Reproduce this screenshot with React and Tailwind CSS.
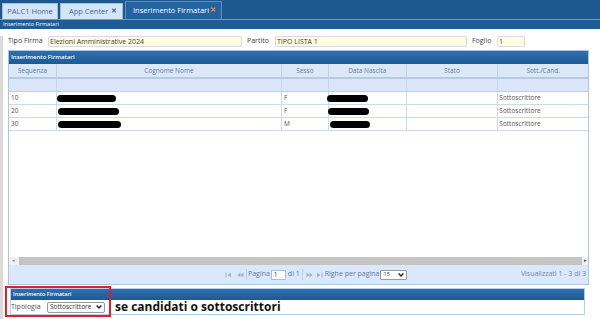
const cols = [
  { label: 'Sequenza', w: 'w-[48px]' },
  { label: 'Cognome Nome', w: 'w-[226px]' },
  { label: 'Sesso', w: 'w-[47px]' },
  { label: 'Data Nascita', w: 'w-[78px]' },
  { label: 'Stato', w: 'w-[92px]' },
  { label: 'Sott./Cand.', w: 'w-[90px]' },
];

const rows = [
  { seq: '10', name: 'w-[59px]', sex: 'F', birth: 'w-[41px] ml-[-2px]' },
  { seq: '20', name: 'w-[61px] ml-[1px]', sex: 'F', birth: 'w-[41px] ml-[-1px]' },
  { seq: '30', name: 'w-[63px] ml-[1px]', sex: 'M', birth: 'w-[40px] ml-[1px]' },
];

function Blot({ className }) {
  return <span className={`block h-[7px] rounded-full bg-black ${className}`} />;
}

function PagerIcon({ dir = 'left', bar }) {
  return (
    <svg width="7" height="6" viewBox="0 0 7 6" className="shrink-0">
      {dir === 'left' ? (
        <>
          {bar && <rect x="0.5" y="0.5" width="1" height="5" fill="#9fb7d3" />}
          <path d={bar ? 'M6 0.5 L2.5 3 L6 5.5Z' : 'M3.5 0.5 L0.5 3 L3.5 5.5Z M6.5 0.5 L3.5 3 L6.5 5.5Z'} fill="#9fb7d3" />
        </>
      ) : (
        <>
          {bar && <rect x="5.5" y="0.5" width="1" height="5" fill="#9fb7d3" />}
          <path d={bar ? 'M1 0.5 L4.5 3 L1 5.5Z' : 'M0.5 0.5 L3.5 3 L0.5 5.5Z M3.5 0.5 L6.5 3 L3.5 5.5Z'} fill="#9fb7d3" />
        </>
      )}
    </svg>
  );
}

function Chevron() {
  return (
    <svg width="6" height="4" viewBox="0 0 6 4" className="shrink-0">
      <path d="M0.6 0.6 L3 3 L5.4 0.6" fill="none" stroke="#222" strokeWidth="1.4" />
    </svg>
  );
}

export default function App() {
  return (
    <div className="relative w-[600px] h-[319px] overflow-hidden bg-white font-['Open_Sans',sans-serif] text-[#333]">
      {/* tab bar */}
      <div className="h-[19px] bg-[#1d5891] flex items-end pl-[2px] gap-[2px] whitespace-nowrap">
        <div className="flex-none h-[16px] w-[56px] bg-[#d6e5f4] border border-b-0 border-[#9dbfe0] flex items-center justify-center text-[7.5px] text-[#3a6a9b]">
          PALC1 Home
        </div>
        <div className="flex-none h-[16px] w-[63px] bg-[#d6e5f4] border border-b-0 border-[#9dbfe0] flex items-center pl-[8px] text-[7.5px] text-[#3a6a9b]">
          App Center
          <span className="ml-auto mr-[5px] text-[7px] font-bold text-[#3c6693]">✕</span>
        </div>
        <div className="flex-none h-[18px] w-[97px] bg-[#2363a0] border border-b-0 border-[#5d8fc2] flex items-center pl-[7px] text-[7.5px] text-white">
          Inserimento Firmatari
          <span className="ml-auto mr-[5px] text-[7px] font-bold text-[#f08a2c]">✕</span>
        </div>
      </div>
      <div className="h-[10px] bg-[#1f5c96] border-t border-[#6d9bcb] flex items-center pl-[3px] text-[5.5px] text-white whitespace-nowrap">
        Inserimento Firmatari
      </div>

      <div className="border-l-[3px] border-[#dadada] h-[290px] pl-[5px]">
        {/* form */}
        <div className="flex items-center h-[11px] mt-[7px] text-[7px] text-[#444] whitespace-nowrap">
          <span className="w-[40px]">Tipo Firma</span>
          <div className="w-[194px] h-[11px] rounded-[2px] border border-[#cfdbe6] bg-[#fefee0] pl-[1px] leading-[9px]">
            Elezioni Amministrative 2024
          </div>
          <span className="ml-[5px] w-[28px]">Partito</span>
          <div className="w-[192px] h-[11px] rounded-[2px] border border-[#cfdbe6] bg-[#fefee0] pl-[1px] leading-[9px]">
            TIPO LISTA 1
          </div>
          <span className="ml-[5px] w-[25px]">Foglio</span>
          <div className="w-[28px] h-[11px] rounded-[2px] border border-[#cfdbe6] bg-[#fefee0] pl-[1px] leading-[9px]">
            1
          </div>
        </div>

        {/* grid */}
        <div className="mt-[3px] w-[581px] h-[235px] border border-[#a9c6e6] flex flex-col">
          <div className="h-[13px] bg-[linear-gradient(#2f6fae,#1c5a95)] flex items-center pl-[2px] text-[6px] font-semibold text-white">
            Inserimento Firmatari
          </div>
          <div className="flex h-[15px] bg-[#dce8f8] border-b-2 border-[#b5cbe4]">
            {cols.map((c, i) => (
              <div
                key={c.label}
                className={`${c.w} flex items-center justify-center text-[6.5px] text-[#5b7ca5] ${i < cols.length - 1 ? 'border-r border-[#bcd2ea]' : ''}`}
              >
                {c.label}
              </div>
            ))}
          </div>
          <div className="flex h-[13px] bg-[#dbe6fb] border-b border-[#b9d0ea]">
            {cols.map((c, i) => (
              <div key={c.label} className={`${c.w} ${i < cols.length - 1 ? 'border-r border-[#c6d8ee]' : ''}`} />
            ))}
          </div>
          {rows.map((r) => (
            <div key={r.seq} className="flex h-[13px] border-b border-[#c9dbef] text-[6.5px] text-[#5a5550]">
              <div className="w-[48px] border-r border-[#c9dbef] flex items-center pl-[2px]">{r.seq}</div>
              <div className="w-[226px] border-r border-[#c9dbef] flex items-center">
                <Blot className={r.name} />
              </div>
              <div className="w-[47px] border-r border-[#c9dbef] flex items-center pl-[2px]">{r.sex}</div>
              <div className="w-[78px] border-r border-[#c9dbef] flex items-center">
                <Blot className={r.birth} />
              </div>
              <div className="w-[92px] border-r border-[#c9dbef]" />
              <div className="w-[90px] flex items-center pl-[1px]">Sottoscrittore</div>
            </div>
          ))}
          <div className="flex-1" />
          {/* scrollbar */}
          <div className="h-[8px] flex bg-[#c4c4c4]">
            <div className="w-[10px] bg-[#f0f0f0] flex items-center pl-[3px] text-[5px] text-[#888]">◂</div>
            <div className="flex-1" />
            <div className="w-[6px] bg-[#f0f0f0] flex items-center justify-center text-[5px] text-[#333]">▸</div>
          </div>
          {/* pager */}
          <div className="h-[19px] bg-[#dbe7fb] flex items-center text-[7px] text-[#5b7ca5] whitespace-nowrap">
            <div className="flex items-center ml-[216px] gap-[5px]">
              <PagerIcon dir="left" bar />
              <PagerIcon dir="left" />
            </div>
            <span className="ml-[2px] pl-[1px] border-l border-[#b9cde6]">Pagina</span>
            <div className="ml-[1px] w-[15px] h-[10px] bg-white border border-[#a9bfd8] text-[6.5px] text-[#333] leading-[8px] pl-[2px]">1</div>
            <span className="ml-[2px] pr-[2px] border-r border-[#b9cde6]">di 1</span>
            <div className="flex items-center ml-[3px] gap-[3px]">
              <PagerIcon dir="right" />
              <PagerIcon dir="right" bar />
            </div>
            <span className="ml-[2px]">Righe per pagina</span>
            <div className="ml-[1px] w-[27px] h-[10px] bg-white border border-[#9a9a9a] rounded-[1px] flex items-center justify-between px-[2px] text-[5.5px] text-[#333]">
              15
              <Chevron />
            </div>
            <span className="ml-auto mr-[2px] text-[#6a88ae]">Visualizzati 1 - 3 di 3</span>
          </div>
        </div>

        {/* bottom panel */}
        <div className="mt-[3px] ml-[2px] w-[575px] h-[27px] border border-[#b4cde8] flex flex-col">
          <div className="h-[11px] bg-[linear-gradient(#2f6fae,#1c5a95)] flex items-center pl-[2px] text-[5.5px] font-semibold text-white">
            Inserimento Firmatari
          </div>
          <div className="flex-1 flex items-center whitespace-nowrap">
            <span className="text-[7px] text-[#555] w-[36px]">Tipologia</span>
            <div className="w-[58px] h-[11px] bg-white border border-[#999] rounded-[2px] flex items-center justify-between px-[2px] text-[6.5px] text-[#333]">
              Sottoscrittore
              <Chevron />
            </div>
            <span className="ml-[10px] text-[12px] font-bold text-[#111] leading-none">se candidati o sottoscrittori</span>
          </div>
        </div>
      </div>

      {/* annotation box */}
      <div className="absolute left-[5px] top-[286px] w-[106px] h-[31px] border-2 border-[#e41e26]" />
    </div>
  );
}
